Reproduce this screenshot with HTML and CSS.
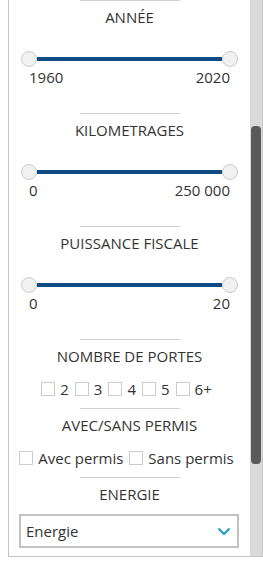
FILE: index.html
```html
<!DOCTYPE html>
<html>
<head>
  <title>Filtres</title>
  <link rel="stylesheet" href="styles.css">
</head>
<body>

  <div class="panel">
    <div class="filters">

      <section class="filter">
        <div class="divider"></div>
        <h3 class="filter-title">ANNÉE</h3>
        <div class="range">
          <span class="handle"></span>
          <span class="track"></span>
          <span class="handle"></span>
        </div>
        <div class="range-labels"><span>1960</span><span>2020</span></div>
      </section>

      <section class="filter">
        <div class="divider"></div>
        <h3 class="filter-title">KILOMETRAGES</h3>
        <div class="range">
          <span class="handle"></span>
          <span class="track"></span>
          <span class="handle"></span>
        </div>
        <div class="range-labels"><span>0</span><span>250 000</span></div>
      </section>

      <section class="filter">
        <div class="divider"></div>
        <h3 class="filter-title">PUISSANCE FISCALE</h3>
        <div class="range">
          <span class="handle"></span>
          <span class="track"></span>
          <span class="handle"></span>
        </div>
        <div class="range-labels"><span>0</span><span>20</span></div>
      </section>

      <section class="filter filter-checks">
        <div class="divider"></div>
        <h3 class="filter-title">NOMBRE DE PORTES</h3>
        <div class="checks">
          <label class="check"><span class="box"></span>2</label>
          <label class="check"><span class="box"></span>3</label>
          <label class="check"><span class="box"></span>4</label>
          <label class="check"><span class="box"></span>5</label>
          <label class="check"><span class="box"></span>6+</label>
        </div>
      </section>

      <section class="filter filter-checks">
        <div class="divider"></div>
        <h3 class="filter-title">AVEC/SANS PERMIS</h3>
        <div class="checks">
          <label class="check"><span class="box"></span>Avec permis</label>
          <label class="check"><span class="box"></span>Sans permis</label>
        </div>
      </section>

      <section class="filter filter-select">
        <div class="divider"></div>
        <h3 class="filter-title">ENERGIE</h3>
        <div class="select">
          <span>Energie</span>
          <svg class="chevron" width="14" height="9" viewBox="0 0 14 9">
            <polyline points="1.5,1.5 7,7 12.5,1.5" fill="none" stroke="#1e9ac0" stroke-width="2"/>
          </svg>
        </div>
      </section>

    </div>
    <div class="scrollbar"><div class="thumb"></div></div>
  </div>

</body>
</html>
```

FILE: styles.css
```css
body {
  margin: 0;
  background-color: #fff;
  font-family: "Open Sans", "Liberation Sans", sans-serif;
  color: #333;
}

.panel {
  display: flex;
  margin-left: 8px;
  height: 556px;
  border-left: 1px solid #c4c4c4;
  border-bottom: 1px solid #c4c4c4;
}

.filters {
  flex: 1;
  overflow: hidden;
}

.divider {
  width: 100px;
  height: 1px;
  margin: 0 auto;
  background-color: #cfcfcf;
}

.filter {
  height: 113px;
}

.filter-checks {
  height: 69px;
}

.filter-title {
  margin: 6px 0 0;
  font-size: 15px;
  font-weight: normal;
  line-height: 20px;
  text-align: center;
}

/* Range slider */
.range {
  display: flex;
  align-items: center;
  margin: 24px 12px 0;
}

.handle {
  width: 14px;
  height: 14px;
  border: 1px solid #cbcbcb;
  border-radius: 50%;
  background-color: #f1f1f1;
}

.track {
  flex: 1;
  height: 4px;
  background-color: #104c84;
}

.range-labels {
  display: flex;
  justify-content: space-between;
  padding: 0 20px;
  font-size: 15px;
  line-height: 20px;
}

/* Checkboxes */
.checks {
  display: flex;
  justify-content: center;
  gap: 6px;
  margin-top: 13px;
  padding-right: 6px;
  font-size: 15px;
  line-height: 20px;
}

.check {
  display: flex;
  align-items: center;
  gap: 5px;
}

.box {
  width: 12px;
  height: 12px;
  border: 1px solid #cccccc;
  background-color: #fff;
}

/* Select */
.select {
  display: flex;
  align-items: center;
  justify-content: space-between;
  box-sizing: border-box;
  width: 220px;
  height: 34px;
  margin: 10px 0 0 10px;
  padding: 0 6px 0 5px;
  border: 2px solid #c2c2c2;
  font-size: 15px;
}

/* Scrollbar */
.scrollbar {
  width: 12px;
  background-color: #dadada;
  border-right: 1px solid #c8c8c8;
}

.thumb {
  height: 338px;
  margin: 126px 1px 0;
  border-radius: 4px;
  background-color: #5a5a5a;
}
```
